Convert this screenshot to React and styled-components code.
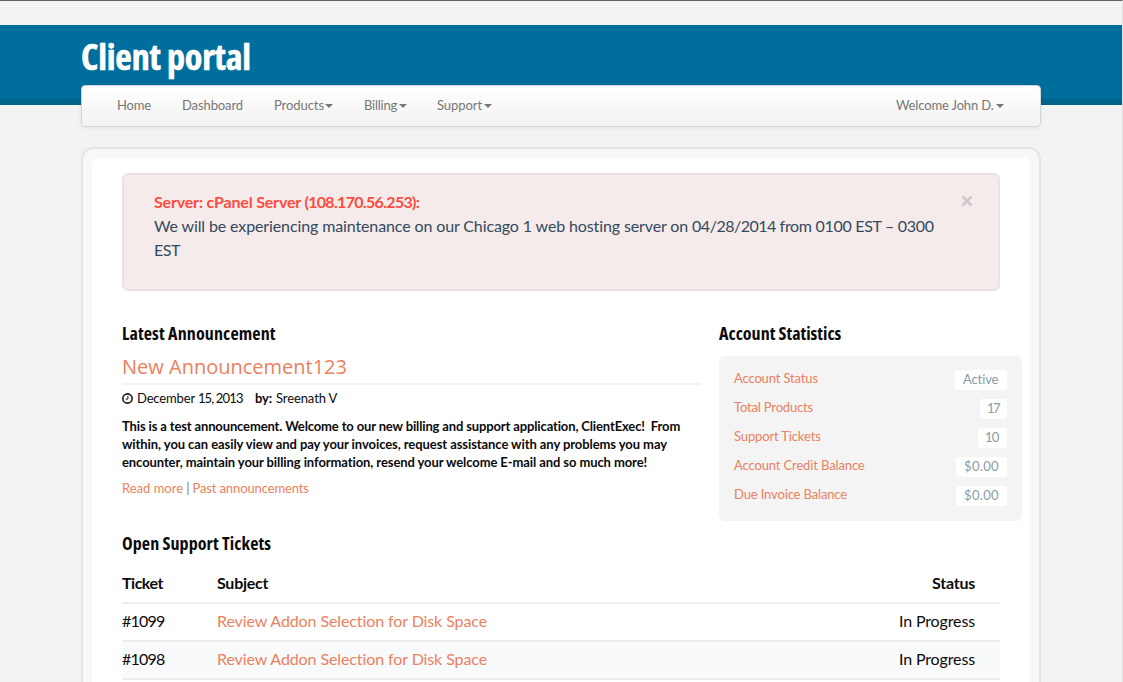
import React from "react";
import styled, { createGlobalStyle } from "styled-components";

const Global = createGlobalStyle`
  * { box-sizing: border-box; }
  html, body { margin: 0; padding: 0; }
  body {
    background: #f3f3f3;
    color: #0b0b0b;
    font-family: "Lato", "Liberation Sans", sans-serif;
    font-size: 13px;
    overflow: hidden;
  }
`;

const Page = styled.div`
  height: 682px;
  overflow: hidden;
  border-top: 1px solid #656365;
  border-right: 1px solid #e2e2e2;
`;

const Header = styled.header`
  height: 80px;
  margin-top: 24px;
  padding-top: 14px;
  background: #006e9c;
  border-bottom: 6px solid #006389;
`;

const Centered = styled.div`
  width: 960px;
  margin-left: 81px;
`;

const Brand = styled.h1`
  margin: 0;
  color: #fff;
  font: 700 36px/36px "Open Sans", sans-serif;
  font-stretch: 75%;
  letter-spacing: -0.18px;
  -webkit-text-stroke: 0.6px #fff;
`;

const Navbar = styled.nav`
  position: relative;
  display: flex;
  height: 42px;
  margin-top: -20px;
  padding: 0 36px 2px 35px;
  border: 1px solid #d4d4d4;
  border-radius: 4px;
  background: linear-gradient(#ffffff, #f2f2f2);
  box-shadow: 0 1px 4px rgba(0, 0, 0, 0.07);
`;

const NavItem = styled.a`
  display: flex;
  align-items: center;
  flex: none;
  width: ${(p) => p.$width}px;
  color: #777;
  letter-spacing: ${(p) => p.$track}px;
  white-space: nowrap;
  ${(p) => p.$right && "margin-left: auto;"}
`;

const Caret = styled.i`
  margin: 1px 0 0 ${(p) => p.$gap}px;
  border: 4px solid transparent;
  border-top-color: #777;
  border-bottom: 0;
`;

const Shell = styled.div`
  height: 560px;
  margin-top: 20px;
  padding: 9px;
  border: 2px solid #e4e4e4;
  border-radius: 12px;
  background: #f8f8f8;
`;

const Content = styled.main`
  height: 550px;
  padding: 15px 30px;
  border-radius: 5px;
  background: #fff;
`;

const Alert = styled.section`
  display: flex;
  justify-content: space-between;
  height: 118px;
  padding: 15px 26px 0 30px;
  border: 2px solid #efdfe4;
  border-radius: 6px;
  background: #f5ebea;
  color: #34495e;
  font-size: 16px;
  line-height: 24px;
`;

const Line = styled.div`
  letter-spacing: ${(p) => p.$track || 0}px;
  white-space: nowrap;
`;

const Tracked = styled.span`
  letter-spacing: ${(p) => p.$track}px;
`;

const AlertTitle = styled(Line)`
  color: #fd4b40;
  font-weight: 700;
`;

const CloseIcon = styled.svg`
  width: 12px;
  height: 12px;
  margin: 5px -1px 0 0;
`;

const Columns = styled.div`
  display: flex;
  gap: 18px;
  width: 900px;
  height: 210px;
  margin-top: 30px;
`;

const Announcement = styled.section`
  width: 579px;
`;

const Heading = styled.h2`
  margin: 0;
  color: #0b0b0b;
  font: 700 18px/24px "Open Sans", sans-serif;
  font-stretch: 75%;
  letter-spacing: ${(p) => p.$track || 0}px;
`;

const Title = styled.h3`
  height: 31px;
  margin: 9px 0 0;
  padding-top: 1px;
  border-bottom: 2px solid #f2f2f2;
  color: #ea8160;
  font: 400 20px/24px "Open Sans", sans-serif;
`;

const Meta = styled.div`
  display: flex;
  align-items: center;
  height: 18px;
  margin-top: 4px;
  white-space: nowrap;
`;

const ClockIcon = styled.svg`
  width: 11px;
  height: 11px;
  margin-right: 4px;
`;

const Item = styled.span`
  width: ${(p) => (p.$width ? `${p.$width}px` : "auto")};
  font-weight: ${(p) => (p.$bold ? 700 : 400)};
  letter-spacing: ${(p) => p.$track}px;
`;

const Body = styled.div`
  margin-top: 10px;
  font-weight: 700;
  line-height: 18px;
`;

const Links = styled.div`
  margin-top: 8px;
  color: #777;
  line-height: 18px;
  white-space: nowrap;
`;

const Link = styled.a`
  color: #ea8160;
  letter-spacing: ${(p) => p.$track || 0}px;
`;

const Stats = styled.section`
  width: 303px;
`;

const StatCard = styled.div`
  display: flex;
  flex-direction: column;
  gap: 9px;
  height: 165px;
  margin-top: 11px;
  padding: 14px 15px 0;
  border-radius: 6px;
  background: #f4f4f4;
`;

const StatRow = styled.div`
  display: flex;
  justify-content: space-between;
  height: 20px;
  line-height: 16px;
`;

const Badge = styled.span`
  width: ${(p) => p.$width}px;
  height: 20px;
  padding-left: ${(p) => p.$pad || 8}px;
  border-radius: 4px;
  background: #fff;
  color: #8c9aa8;
  letter-spacing: ${(p) => p.$track}px;
  line-height: 18px;
  white-space: nowrap;
`;

const Table = styled.div`
  margin-top: 11px;
  font-size: 16px;
`;

const Row = styled.div`
  display: grid;
  grid-template-columns: 95px 1fr auto;
  align-items: center;
  height: 38px;
  padding: 0 25px 4px 0;
  border-bottom: 2px solid #ededee;
  background: ${(p) => (p.$shaded ? "#f9fafc" : "#fff")};
  font-weight: ${(p) => (p.$head ? 700 : 400)};
`;

const nav = [
  { label: "Home", track: -0.16, width: 65 },
  { label: "Dashboard", track: -0.1, width: 92 },
  { label: "Products", track: -0.07, width: 90, caret: true, gap: 1 },
  { label: "Billing", track: -0.24, width: 73, caret: true, gap: 2 },
  { label: "Support", track: -0.07, width: 60, caret: true, gap: 2 },
];

const stats = [
  { label: "Account Status", track: -0.14, value: "Active", width: 52, valueTrack: -0.12 },
  { label: "Total Products", track: -0.17, value: "17", width: 27, pad: 7, valueTrack: -1.6 },
  { label: "Support Tickets", track: -0.14, value: "10", width: 29, pad: 7, valueTrack: -0.8 },
  { label: "Account Credit Balance", track: -0.13, value: "$0.00", width: 51, valueTrack: 0.35 },
  { label: "Due Invoice Balance", track: -0.14, value: "$0.00", width: 51, valueTrack: 0.35 },
];

const tickets = ["#1099", "#1098"];

export default function App() {
  return (
    <Page>
      <Global />
      <Header>
        <Centered>
          <Brand>Client portal</Brand>
        </Centered>
      </Header>
      <Centered>
        <Navbar>
          {nav.map((n) => (
            <NavItem key={n.label} $width={n.width} $track={n.track}>
              {n.label}
              {n.caret && <Caret $gap={n.gap} />}
            </NavItem>
          ))}
          <NavItem $right $width={108} $track={-0.14}>
            Welcome John D.
            <Caret $gap={2} />
          </NavItem>
        </Navbar>
        <Shell>
          <Content>
            <Alert>
              <div>
                <AlertTitle $track={-0.18}>
                  Server: cPanel Server <Tracked $track={-0.68}>(108.170.56.253):</Tracked>
                </AlertTitle>
                <Line $track={-0.12}>
                  We will be experiencing maintenance on our Chicago 1 web hosting server on{" "}
                  <Tracked $track={-0.5}>04/28/2014</Tracked>
                  <Tracked $track={-0.3}> from 0100 EST – 0300</Tracked>
                </Line>
                <Line $track={-0.4}>EST</Line>
              </div>
              <CloseIcon viewBox="0 0 12 12">
                <path d="M1.6 1.6L10.4 10.4M10.4 1.6L1.6 10.4" stroke="#cdc8cb" strokeWidth="2.7" />
              </CloseIcon>
            </Alert>
            <Columns>
              <Announcement>
                <Heading $track={0.12}>Latest Announcement</Heading>
                <Title>New Announcement123</Title>
                <Meta>
                  <ClockIcon viewBox="0 0 11 11" fill="none" stroke="#1a1a1a">
                    <circle cx="5.5" cy="5.5" r="4.65" strokeWidth="1.6" />
                    <path d="M5.9 2.8V6.1H3.6" strokeWidth="1" />
                  </ClockIcon>
                  <Item $width={118} $track={-0.48}>
                    <Tracked $track={-0.15}>December </Tracked>
                    <Tracked $track={-0.85}>15, 2013</Tracked>
                  </Item>
                  <Item $width={21} $bold $track={-0.13}>by:</Item>
                  <Item $track={-0.1}>Sreenath V</Item>
                </Meta>
                <Body>
                  <Line $track={-0.137}>
                    This is a test announcement. Welcome to our new billing and support application, ClientExec!&nbsp; From
                  </Line>
                  <Line $track={-0.075}>
                    within, you can easily view and pay your invoices, request assistance with any problems you may
                  </Line>
                  <Line $track={-0.09}>
                    encounter, maintain your billing information, resend your welcome E-mail and so much more!
                  </Line>
                </Body>
                <Links>
                  <Link>Read more</Link>
                  <Tracked $track={-0.2}> | </Tracked>
                  <Link $track={-0.11}>Past announcements</Link>
                </Links>
              </Announcement>
              <Stats>
                <Heading>Account Statistics</Heading>
                <StatCard>
                  {stats.map((s) => (
                    <StatRow key={s.label}>
                      <Link $track={s.track}>{s.label}</Link>
                      <Badge $width={s.width} $pad={s.pad} $track={s.valueTrack}>{s.value}</Badge>
                    </StatRow>
                  ))}
                </StatCard>
              </Stats>
            </Columns>
            <Heading $track={0.08}>Open Support Tickets</Heading>
            <Table>
              <Row $head>
                <Item $bold $track={-0.48}>Ticket</Item>
                <Item $bold $track={-0.26}>Subject</Item>
                <Item $bold $track={-0.23}>Status</Item>
              </Row>
              {tickets.map((id, i) => (
                <Row key={id} $shaded={i % 2 === 1}>
                  <Item $track={-0.78}>{id}</Item>
                  <Link $track={-0.1}>Review Addon Selection for Disk Space</Link>
                  <Item $track={-0.13}>In Progress</Item>
                </Row>
              ))}
            </Table>
          </Content>
        </Shell>
      </Centered>
    </Page>
  );
}
